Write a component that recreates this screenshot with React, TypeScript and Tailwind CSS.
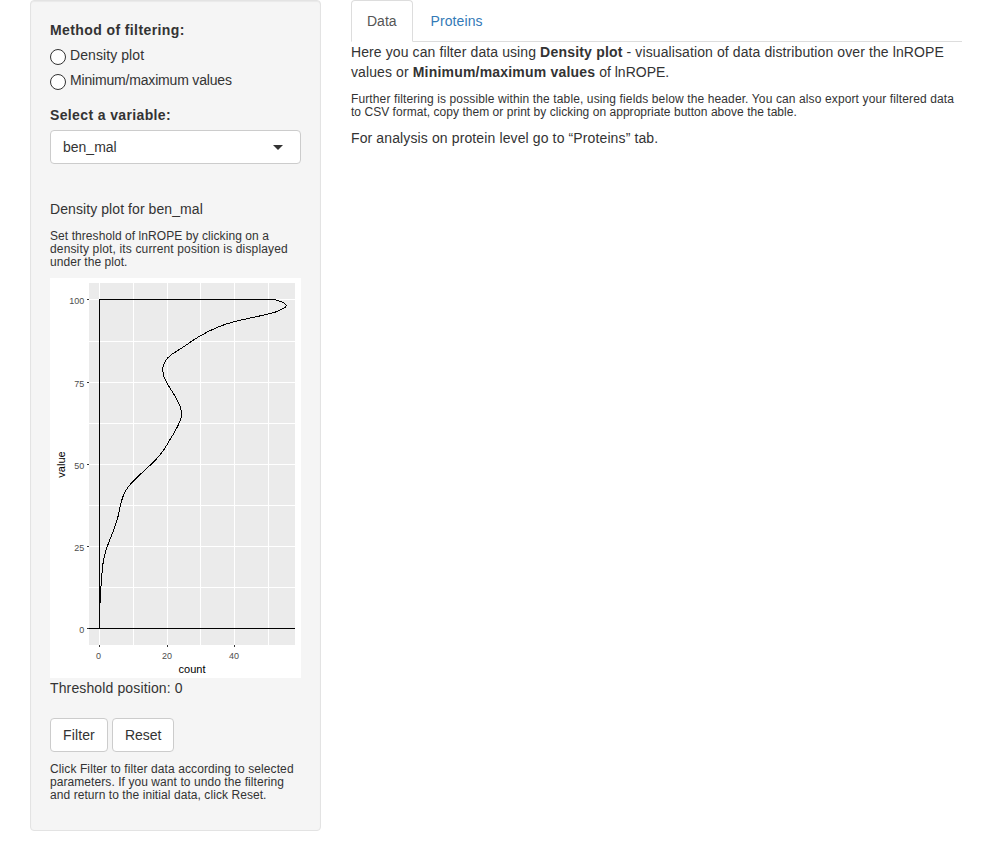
import type { ReactNode } from "react";

type Point = [number, number];

const curve: Point[] = [
  [275, 299.5], [280, 301.3], [284, 303], [286.5, 305.6], [283.3, 308.5], [275, 312.2],
  [260, 315.9], [235, 321.5], [218.3, 326.9], [200.3, 335.8], [183.3, 347], [171, 355],
  [165.6, 360.6], [162.8, 368.3], [164, 376.6], [167.5, 384], [175.2, 396.6], [180.3, 407],
  [181.6, 414.5], [179.8, 421.6], [174.8, 431.6], [168.2, 442.6], [163.3, 450.6],
  [155, 460.6], [146.6, 468.5], [131.8, 482.6], [125.2, 491.6], [120.8, 503.3],
  [117.6, 518.3], [113.4, 530.6], [107.8, 545], [103.7, 559], [101.7, 576.6],
  [100.8, 590], [100, 603], [99.5, 628],
];

// Catmull-Rom spline expressed as cubic Béziers.
function smoothPath(points: Point[]): string {
  let d = `M${points[0][0]} ${points[0][1]}`;
  for (let i = 0; i < points.length - 1; i++) {
    const p0 = points[Math.max(i - 1, 0)];
    const p1 = points[i];
    const p2 = points[i + 1];
    const p3 = points[Math.min(i + 2, points.length - 1)];
    d += ` C${p1[0] + (p2[0] - p0[0]) / 6} ${p1[1] + (p2[1] - p0[1]) / 6} ${p2[0] - (p3[0] - p1[0]) / 6} ${p2[1] - (p3[1] - p1[1]) / 6} ${p2[0]} ${p2[1]}`;
  }
  return d;
}

const gridX = [99, 133, 167, 200, 234, 268];
const gridY = [299, 341, 382, 423, 464, 505, 546, 587, 628];
const yTicks: [number, string][] = [[299, "100"], [382, "75"], [464, "50"], [546, "25"], [628, "0"]];
const xTicks: [number, string][] = [[99, "0"], [167, "20"], [234, "40"]];

function DensityPlot() {
  return (
    <svg width="251" height="400" viewBox="50 278 251 400" className="block">
      <rect x="50" y="278" width="251" height="400" fill="#fff" />
      <rect x="89" y="283" width="206" height="362" fill="#ebebeb" />
      {gridX.map((x) => <rect key={x} x={x} y="283" width="1" height="362" fill="#fff" />)}
      {gridY.map((y) => <rect key={y} x="89" y={y} width="206" height="1" fill="#fff" />)}
      {yTicks.map(([y, label]) => (
        <g key={label}>
          <rect x="87" y={y} width="2" height="1" fill="#333" />
          <text x="84.3" y={y + 5} fontSize="9" textAnchor="end" fill="#4d4d4d">{label}</text>
        </g>
      ))}
      {xTicks.map(([x, label]) => (
        <g key={label}>
          <rect x={x} y="645" width="1" height="2" fill="#333" />
          <text x={label === "0" ? x - 0.5 : x} y="659" fontSize="9" textAnchor="middle" fill="#4d4d4d">{label}</text>
        </g>
      ))}
      <rect x="99" y="299" width="176" height="1" />
      <rect x="99" y="299" width="1" height="330" />
      <rect x="89" y="628" width="206" height="1" />
      <path d={smoothPath(curve)} fill="none" stroke="#000" strokeWidth="1" shapeRendering="crispEdges" />
      <text x="192" y="673" fontSize="11" textAnchor="middle" fill="#000">count</text>
      <text transform="translate(65 464.5) rotate(-90)" fontSize="11" textAnchor="middle" fill="#000">value</text>
    </svg>
  );
}

function Radio({ children }: { children: ReactNode }) {
  return (
    <label className="flex h-5 items-center">
      <input type="radio" name="method" className="mt-1 mr-1 size-4 shrink-0 appearance-none rounded-full border border-[#333] bg-white" />
      {children}
    </label>
  );
}

function Button({ children }: { children: ReactNode }) {
  return <button className="h-[34px] rounded border border-[#ccc] bg-white px-3">{children}</button>;
}

export default function App() {
  return (
    <div className="flex h-[851px] items-start gap-[30px] bg-white pl-[30px] font-['Liberation_Sans',Arial,sans-serif] text-sm leading-5 text-[#333]">
      <aside className="w-[291px] shrink-0 rounded border border-[#e3e3e3] bg-[#f5f5f5] p-[19px] shadow-[inset_0_1px_1px_rgba(0,0,0,0.05)]">
        <div className="mb-[5px] font-bold tracking-[0.4px]">Method of filtering:</div>
        <div className="mb-[15px] flex flex-col gap-[5px]">
          <Radio><span className="tracking-[0.08px]">Density plot</span></Radio>
          <Radio><span className="tracking-[-0.18px]">Minimum/maximum values</span></Radio>
        </div>
        <div className="mb-[5px] font-bold tracking-[0.37px]">Select a variable:</div>
        <div className="mb-[35px] flex h-[34px] items-center justify-between rounded border border-[#ccc] bg-white pr-[17px] pl-3">
          <span>ben_mal</span>
          <svg width="10" height="5" viewBox="0 0 10 5"><path d="M0 0h10L5 5z" fill="#333" /></svg>
        </div>
        <p className="mb-2.5 tracking-[0.08px]">Density plot for ben_mal</p>
        <p className="mb-[9px] pt-px text-xs leading-[13px] whitespace-nowrap">
          <span className="tracking-[0.07px]">Set threshold of lnROPE by clicking on a</span><br />
          <span className="tracking-[0.15px]">density plot, its current position is displayed</span><br />
          <span className="tracking-[0.05px]">under the plot.</span>
        </p>
        <DensityPlot />
        <p className="mb-5 tracking-[0.13px]">Threshold position: 0</p>
        <div className="mb-2.5 flex gap-1">
          <Button><span className="tracking-[0.13px]">Filter</span></Button>
          <Button>Reset</Button>
        </div>
        <p className="mb-[9px] pt-px text-xs leading-[13px] whitespace-nowrap">
          <span className="tracking-[0.1px]">Click Filter to filter data according to selected</span><br />
          <span className="tracking-[0.07px]">parameters. If you want to undo the filtering</span><br />
          <span className="tracking-[0.07px]">and return to the initial data, click Reset.</span>
        </p>
      </aside>
      <main className="w-[611px]">
        <nav className="flex h-[42px] border-b border-[#ddd]">
          <a className="mr-0.5 h-[42px] rounded-t border border-[#ddd] border-b-white bg-white px-[15px] py-2.5 text-[#555]">Data</a>
          <a className="px-4 py-[11px] tracking-[0.08px] text-[#337ab7]">Proteins</a>
        </nav>
        <p className="mb-2.5 tracking-[0.1px] whitespace-nowrap">
          Here you can filter data using <b className="tracking-[0.2px]">Density plot</b> - visualisation of data distribution over the lnROPE<br />
          values or <b className="tracking-[0.2px]">Minimum/maximum values</b><span className="tracking-normal"> of lnROPE.</span>
        </p>
        <p className="mb-[9px] pt-px text-xs leading-[13px] whitespace-nowrap">
          <span className="tracking-[0.12px]">Further filtering is possible within the table, using fields below the header. You can also export your filtered data</span><br />
          <span className="tracking-[0.035px]">to CSV format, copy them or print by clicking on appropriate button above the table.</span>
        </p>
        <p className="tracking-[0.12px]">For analysis on protein level go to “Proteins” tab.</p>
      </main>
    </div>
  );
}
